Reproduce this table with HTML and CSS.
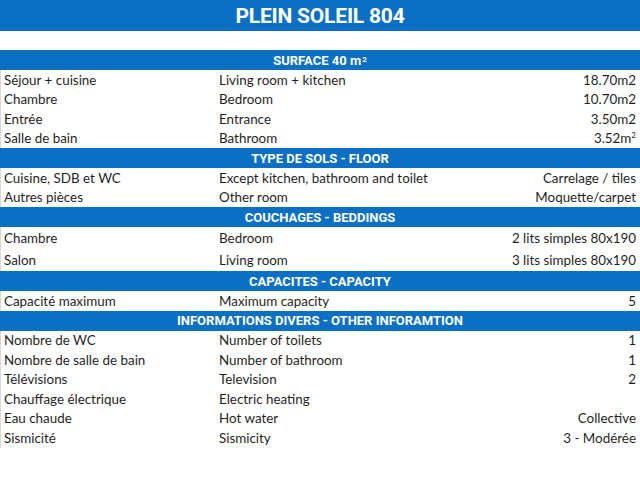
FILE: index.html
```html
<!DOCTYPE html>
<html lang="fr">
<head>
<meta charset="utf-8">
<title>Plein Soleil 804</title>
<link rel="stylesheet" href="styles.css">
</head>
<body>
<div class="sheet">
  <div class="title">PLEIN SOLEIL 804</div>
  <div class="gap"></div>

  <div class="hdr">SURFACE 40 m<sup>2</sup></div>
  <div class="row"><span>Séjour + cuisine</span><span>Living room + kitchen</span><span class="val">18.70m2</span></div>
  <div class="row"><span>Chambre</span><span>Bedroom</span><span class="val">10.70m2</span></div>
  <div class="row"><span>Entrée</span><span>Entrance</span><span class="val">3.50m2</span></div>
  <div class="row"><span>Salle de bain</span><span>Bathroom</span><span class="val">3.52m<sup>2</sup></span></div>

  <div class="hdr">TYPE DE SOLS - FLOOR</div>
  <div class="row"><span>Cuisine, SDB et WC</span><span>Except kitchen, bathroom and toilet</span><span class="val">Carrelage / tiles</span></div>
  <div class="row"><span>Autres pièces</span><span>Other room</span><span class="val">Moquette/carpet</span></div>

  <div class="hdr">COUCHAGES - BEDDINGS</div>
  <div class="row tall"><span>Chambre</span><span>Bedroom</span><span class="val">2 lits simples 80x190</span></div>
  <div class="row tall"><span>Salon</span><span>Living room</span><span class="val">3 lits simples 80x190</span></div>

  <div class="hdr">CAPACITES - CAPACITY</div>
  <div class="row"><span>Capacité maximum</span><span>Maximum capacity</span><span class="val">5</span></div>

  <div class="hdr">INFORMATIONS DIVERS - OTHER INFORAMTION</div>
  <div class="row"><span>Nombre de WC</span><span>Number of toilets</span><span class="val">1</span></div>
  <div class="row"><span>Nombre de salle de bain</span><span>Number of bathroom</span><span class="val">1</span></div>
  <div class="row"><span>Télévisions</span><span>Television</span><span class="val">2</span></div>
  <div class="row"><span>Chauffage électrique</span><span>Electric heating</span><span class="val"></span></div>
  <div class="row"><span>Eau chaude</span><span>Hot water</span><span class="val">Collective</span></div>
  <div class="row"><span>Sismicité</span><span>Sismicity</span><span class="val">3 - Modérée</span></div>
</div>
</body>
</html>
```

FILE: styles.css
```css
html, body {
  margin: 0;
  padding: 0;
  background: #ffffff;
}

.sheet {
  width: 640px;
  font-family: "Lato", "Liberation Sans", sans-serif;
  color: #1f1f1f;
}

.title {
  height: 31px;
  background: #0b6fc4;
  color: #ffffff;
  font-family: "Roboto", "Liberation Sans", sans-serif;
  font-weight: 700;
  font-size: 21px;
  letter-spacing: -0.2px;
  display: flex;
  align-items: center;
  justify-content: center;
}

.gap {
  height: 19px;
}

.hdr {
  height: 20px;
  background: #0b6fc4;
  color: #ffffff;
  font-family: "Roboto", "Liberation Sans", sans-serif;
  font-weight: 700;
  font-size: 13px;
  display: flex;
  align-items: center;
  justify-content: center;
}

.hdr sup {
  font-size: 8px;
  line-height: 0;
  vertical-align: 5px;
  margin-left: 1px;
}

.row {
  height: 19.5px;
  display: grid;
  grid-template-columns: 215px 1fr auto;
  align-items: center;
  font-size: 13.4px;
  padding: 0 4px 0 3px;
  border-left: 1px solid #d8d8d8;
  box-sizing: border-box;
}

.row.tall {
  height: 22px;
}

.val {
  text-align: right;
}

.val sup {
  font-size: 8px;
  line-height: 0;
  vertical-align: 5px;
}
```
